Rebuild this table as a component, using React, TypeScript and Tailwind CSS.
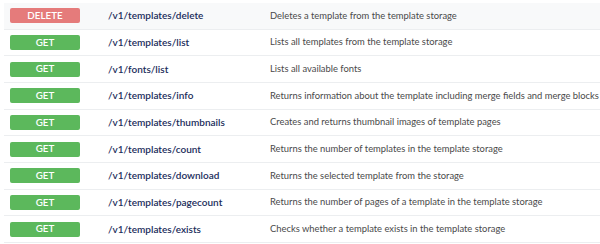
import React from "react";

const rows = [
  { m: "DELETE", p: "/v1/templates/delete", d: "Deletes a template from the template storage" },
  { m: "GET", p: "/v1/templates/list", d: "Lists all templates from the template storage" },
  { m: "GET", p: "/v1/fonts/list", d: "Lists all available fonts" },
  { m: "GET", p: "/v1/templates/info", d: "Returns information about the template including merge fields and merge blocks" },
  { m: "GET", p: "/v1/templates/thumbnails", d: "Creates and returns thumbnail images of template pages" },
  { m: "GET", p: "/v1/templates/count", d: "Returns the number of templates in the template storage" },
  { m: "GET", p: "/v1/templates/download", d: "Returns the selected template from the storage" },
  { m: "GET", p: "/v1/templates/pagecount", d: "Returns the number of pages of a template in the template storage" },
  { m: "GET", p: "/v1/templates/exists", d: "Checks whether a template exists in the template storage" },
];

export default function App() {
  return (
    <div className="w-[600px] h-[244px] overflow-hidden bg-white pt-[3px] pl-[4px] font-['Lato',_'Liberation_Sans',_sans-serif]">
      {rows.map((r, i) => (
        <div
          key={i}
          className={`flex shrink-0 items-center h-[26.67px] border-b border-[#eceef0] whitespace-nowrap ${
            i === 0 ? "bg-[#f8f9fa]" : "bg-white"
          }`}
        >
          <div
            className={`ml-[6px] shrink-0 w-[70px] h-[15px] rounded-[2px] flex items-center justify-center text-[9.8px] font-semibold text-white leading-none ${
              r.m === "DELETE" ? "bg-[#e57b7b]" : "bg-[#5cb85c]"
            }`}
          >
            {r.m}
          </div>
          <div className="ml-[28px] shrink-0 w-[162px] text-[10px] font-semibold text-[#1b2d5b]">{r.p}</div>
          <div className="shrink-0 text-[9.4px] text-[#4a4a4a]">{r.d}</div>
        </div>
      ))}
    </div>
  );
}
